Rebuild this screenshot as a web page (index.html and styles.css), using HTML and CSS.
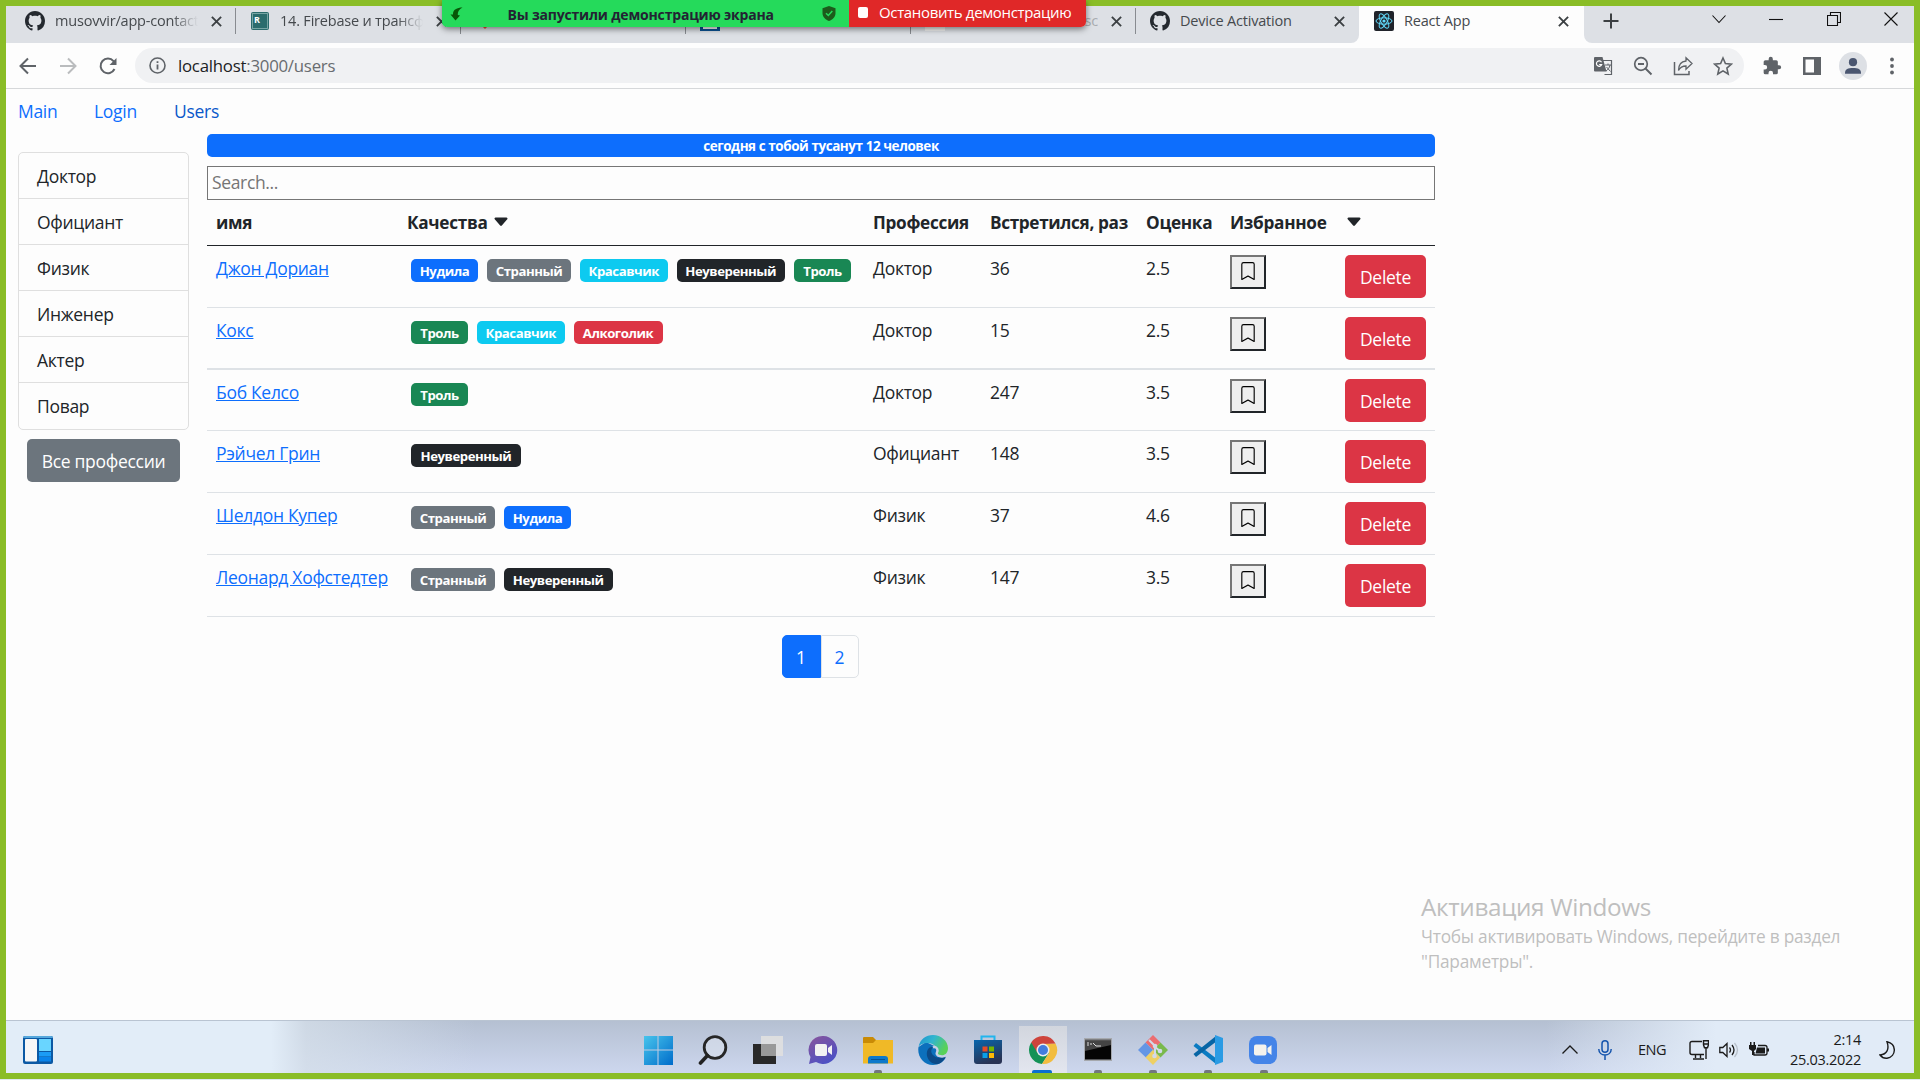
FILE: index.html
```html
<!DOCTYPE html>
<html lang="ru">
<head>
<meta charset="utf-8">
<title>React App</title>
<link rel="stylesheet" href="styles.css">
</head>
<body>
<svg class="defs" width="0" height="0">
  <symbol id="github" viewBox="0 0 16 16"><path d="M8 0C3.58 0 0 3.58 0 8c0 3.54 2.29 6.53 5.47 7.59.4.07.55-.17.55-.38 0-.19-.01-.82-.01-1.49-2.01.37-2.53-.49-2.69-.94-.09-.23-.48-.94-.82-1.13-.28-.15-.68-.52-.01-.53.63-.01 1.08.58 1.23.82.72 1.21 1.87.87 2.33.66.07-.52.28-.87.51-1.07-1.78-.2-3.64-.89-3.64-3.95 0-.87.31-1.59.82-2.15-.08-.2-.36-1.02.08-2.12 0 0 .67-.21 2.2.82.64-.18 1.32-.27 2-.27s1.36.09 2 .27c1.53-1.04 2.2-.82 2.2-.82.44 1.1.16 1.92.08 2.12.51.56.82 1.27.82 2.15 0 3.07-1.87 3.75-3.65 3.95.29.25.54.73.54 1.48 0 1.07-.01 1.93-.01 2.2 0 .21.15.46.55.38A8.01 8.01 0 0 0 16 8c0-4.42-3.58-8-8-8z" fill="#24292f"/></symbol>
  <symbol id="x" viewBox="0 0 10 10"><path d="M.8.8l8.4 8.4M9.2.8L.8 9.2" stroke="#3c4043" stroke-width="1.7"/></symbol>
  <symbol id="bookmark" viewBox="0 0 16 16"><path d="M2 2a2 2 0 0 1 2-2h8a2 2 0 0 1 2 2v13.5a.5.5 0 0 1-.777.416L8 13.101l-5.223 2.815A.5.5 0 0 1 2 15.5V2zm2-1a1 1 0 0 0-1 1v12.566l4.723-2.482a.5.5 0 0 1 .554 0L13 14.566V2a1 1 0 0 0-1-1H4z"/></symbol>
  <symbol id="caret" viewBox="0 0 16 16"><path d="M7.247 11.14 2.451 5.658C1.885 5.013 2.345 4 3.204 4h9.592a1 1 0 0 1 .753 1.659l-4.796 5.48a1 1 0 0 1-1.506 0z"/></symbol>
</svg>
<div class="screen">
  <div class="share-bar">
    <div class="share-status">
      <svg width="14" height="14" viewBox="0 0 14 14"><path d="M12.5.5C7 .5 2.800 2.500 3 7.500H.5l5 6L10 8.500l-2.200-.5C7.500 5 9 2 12.500.5z" fill="#075808"/></svg>
      <span>Вы запустили демонстрацию экрана</span>
      <svg width="14" height="15" viewBox="0 0 14 15"><path d="M7 0l6.500 2.200V7c0 4-3 6.800-6.500 8C3.500 13.800.5 11 .5 7V2.200z" fill="#1c5b1b"/><path d="M4 7.200l2.300 2.300L10.300 5" fill="none" stroke="#25da5b" stroke-width="1.500"/></svg>
    </div>
    <div class="share-stop"><i></i><span>Остановить демонстрацию</span></div>
  </div>
  <header class="tabs">
    <div class="tab"><svg class="fav" ><use href="#github"/></svg><span class="t1">musovvir/app-contact</span><svg class="close"><use href="#x"/></svg></div>
    <div class="tab"><svg class="fav" viewBox="0 0 20 20"><rect x="1" y="1" width="18" height="18" rx="2" fill="#2b6c6d"/><rect x="2.500" y="2.500" width="15" height="15" fill="none" stroke="#77a5a4"/><text x="4" y="11.500" class="r">R</text></svg><span class="t2">14. Firebase и трансфо</span><svg class="close"><use href="#x"/></svg></div>
    <div class="tab"><svg class="fav" viewBox="0 0 20 20"><path d="M10 4l7 7-7 7-7-7z" fill="#f1502f"/></svg><span></span></div>
    <div class="tab"><svg class="fav" viewBox="0 0 20 20"><path d="M0 0h20v20H0z" fill="#0b5394"/><path d="M4 6v11h12V6" fill="none" stroke="#fff" stroke-width="2"/></svg><span></span></div>
    <div class="tab"><svg class="fav" viewBox="0 0 20 20"><path d="M0 0h20v20H0z" fill="#f4f4f2"/></svg><span class="tail">sc</span><svg class="close"><use href="#x"/></svg></div>
    <div class="tab last"><svg class="fav"><use href="#github"/></svg><span class="t3">Device Activation</span><svg class="close"><use href="#x"/></svg></div>
    <div class="tab active"><svg class="fav" viewBox="0 0 20 20"><rect width="20" height="20" rx="2" fill="#20232a"/><g fill="none" stroke="#61dafb" stroke-width="1"><ellipse cx="10" cy="10" rx="8" ry="3.200"/><ellipse cx="10" cy="10" rx="8" ry="3.200" transform="rotate(60 10 10)"/><ellipse cx="10" cy="10" rx="8" ry="3.200" transform="rotate(120 10 10)"/></g><circle cx="10" cy="10" r="1.600" fill="#61dafb"/></svg><span class="t4">React App</span><svg class="close"><use href="#x"/></svg></div>
    <div class="rest">
      <svg class="plus" width="16" height="16" viewBox="0 0 16 16"><path d="M8 .5v15M.5 8h15" stroke="#3c4043" stroke-width="2"/></svg>
      <div class="win">
        <svg width="14" height="14" viewBox="0 0 14 14"><path d="M.5 3.500L7 10.500l6.500-7"/></svg>
        <svg width="14" height="14" viewBox="0 0 14 14"><path d="M0 7.500h14"/></svg>
        <svg width="14" height="14" viewBox="0 0 14 14"><path d="M.5 3.500h10v10H.5zM3.500 3V.5h10v10H11"/></svg>
        <svg width="14" height="14" viewBox="0 0 14 14"><path d="M.5.5l13 13M13.500.5l-13 13"/></svg>
      </div>
    </div>
  </header>
  <div class="toolbar">
    <svg class="nav" viewBox="0 0 18 18"><path d="M17 9H2M9 1.500L1.500 9 9 16.500" stroke="#5f6368"/></svg>
    <svg class="nav" viewBox="0 0 18 18"><path d="M1 9h15M9 1.500L16.500 9 9 16.500" stroke="#babcbe"/></svg>
    <svg class="nav" viewBox="0 0 18 18"><path d="M15.500 12A7.300 7.300 0 1 1 14.500 4.200L16 6" stroke="#5f6368"/><path d="M17.500 1v7h-7z" fill="#5f6368"/></svg>
    <div class="omni">
      <svg width="17" height="17" viewBox="0 0 17 17"><circle cx="8.500" cy="8.500" r="7.500" fill="none" stroke="#5f6368" stroke-width="1.600"/><path d="M8.500 7.500v5M8.500 4.200V6" stroke="#5f6368" stroke-width="1.800"/></svg>
      <span class="url"><b>localhost</b>:3000/users</span>
      <div class="oicons">
        <svg viewBox="0 0 20 20"><path d="M10 4.500h8.500v14H11.500" fill="none" stroke="#5f6368" stroke-width="1.200"/><path d="M2 1h7.500L13.500 15.500H2q-1 0-1-1V2q0-1 1-1z" fill="#5f6368"/><path d="M8.500 6.200A2.700 2.700 0 1 0 8.700 8.500H6.200" fill="none" stroke="#fff" stroke-width="1.200"/><path d="M12 9h6M15 7.500V9M17 9c-.5 3-2 4.500-4 6M13.500 11l4 4.500" fill="none" stroke="#5f6368"/></svg>
        <svg viewBox="0 0 20 20"><circle cx="8" cy="8" r="6.300" fill="none" stroke="#5f6368" stroke-width="1.700"/><path d="M12.500 12.500l6 6M5 8h6" stroke="#5f6368" stroke-width="1.900"/></svg>
        <svg viewBox="0 0 20 20"><path d="M1.500 6v12.500H16V15" fill="none" stroke="#5f6368" stroke-width="1.500"/><path d="M13 1.800l6 5.700-6 5.700V10c-3.500 0-6 1.500-7.500 4.500C5.500 9.500 8 5.500 13 5z" fill="none" stroke="#5f6368" stroke-width="1.300"/></svg>
        <svg viewBox="0 0 20 20"><path d="M10 2l2.400 5.500 6 .6-4.500 4 1.300 5.900L10 14.900 4.800 18l1.300-5.900-4.500-4 6-.6z" fill="none" stroke="#5f6368" stroke-width="1.600"/></svg>
      </div>
    </div>
    <div class="ext">
      <svg viewBox="0 0 24 24"><path d="M20.500 11H19V7a2 2 0 0 0-2-2h-4V3.500a2.500 2.500 0 0 0-5 0V5H4a2 2 0 0 0-2 2v3.800h1.500a2.700 2.700 0 0 1 0 5.400H2V20a2 2 0 0 0 2 2h3.800v-1.500a2.700 2.700 0 0 1 5.400 0V22H17a2 2 0 0 0 2-2v-4h1.500a2.500 2.500 0 0 0 0-5z" fill="#5f6368"/></svg>
      <svg viewBox="0 0 20 20"><path d="M1 1h18v18H1zM3.500 3.500v13H12v-13z" fill="#5f6368" fill-rule="evenodd"/></svg>
      <svg class="avatar" viewBox="0 0 28 28"><circle cx="14" cy="14" r="14" fill="#dde0e5"/><circle cx="14" cy="10.200" r="4.100" fill="#4a5670"/><path d="M6 21c0-4 3-5 8-5s8 1 8 5v.8H6z" fill="#4a5670"/></svg>
      <svg class="dots" viewBox="0 0 20 20"><g fill="#5f6368"><circle cx="10" cy="3.500" r="1.900"/><circle cx="10" cy="10" r="1.900"/><circle cx="10" cy="16.500" r="1.900"/></g></svg>
    </div>
  </div>
  <main class="page">
    <nav class="links"><a>Main</a><a>Login</a><a class="on">Users</a></nav>
    <div class="cols">
      <aside>
        <ul class="group"><li>Доктор</li><li>Официант</li><li>Физик</li><li>Инженер</li><li>Актер</li><li>Повар</li></ul>
        <button class="btn gray">Все профессии</button>
      </aside>
      <section>
        <div class="banner">сегодня с тобой тусанут 12 человек</div>
        <input class="search" placeholder="Search...">
        <table>
          <colgroup><col class="c1"><col class="c2"><col class="c3"><col class="c4"><col class="c5"><col class="c6"><col class="c7"></colgroup>
          <thead><tr><th>имя</th><th>Качества <svg class="caret"><use href="#caret"/></svg></th><th>Профессия</th><th class="met">Встретился, раз</th><th>Оценка</th><th>Избранное</th><th><svg class="caret"><use href="#caret"/></svg></th></tr></thead>
          <tbody>
            <tr><td><a>Джон Дориан</a></td><td><div class="badges"><b class="blue w67">Нудила</b><b class="grey w84">Странный</b><b class="cyan w88">Красавчик</b><b class="dark w109">Неуверенный</b><b class="green w57">Троль</b></div></td><td>Доктор</td><td>36</td><td>2.5</td><td><button class="mark"><svg><use href="#bookmark"/></svg></button></td><td><button class="btn red">Delete</button></td></tr>
            <tr class="thick"><td><a>Кокс</a></td><td><div class="badges"><b class="green w57">Троль</b><b class="cyan w88">Красавчик</b><b class="pink w89">Алкоголик</b></div></td><td>Доктор</td><td>15</td><td>2.5</td><td><button class="mark"><svg><use href="#bookmark"/></svg></button></td><td><button class="btn red">Delete</button></td></tr>
            <tr class="short"><td><a>Боб Келсо</a></td><td><div class="badges"><b class="green w57">Троль</b></div></td><td>Доктор</td><td>247</td><td>3.5</td><td><button class="mark"><svg><use href="#bookmark"/></svg></button></td><td><button class="btn red">Delete</button></td></tr>
            <tr><td><a>Рэйчел Грин</a></td><td><div class="badges"><b class="dark w110">Неуверенный</b></div></td><td>Официант</td><td>148</td><td>3.5</td><td><button class="mark"><svg><use href="#bookmark"/></svg></button></td><td><button class="btn red">Delete</button></td></tr>
            <tr><td><a>Шелдон Купер</a></td><td><div class="badges"><b class="grey w84">Странный</b><b class="blue w67">Нудила</b></div></td><td>Физик</td><td>37</td><td>4.6</td><td><button class="mark"><svg><use href="#bookmark"/></svg></button></td><td><button class="btn red">Delete</button></td></tr>
            <tr><td><a>Леонард Хофстедтер</a></td><td><div class="badges"><b class="grey w84">Странный</b><b class="dark w109">Неуверенный</b></div></td><td>Физик</td><td>147</td><td>3.5</td><td><button class="mark"><svg><use href="#bookmark"/></svg></button></td><td><button class="btn red">Delete</button></td></tr>
          </tbody>
        </table>
        <div class="pages"><span class="cur">1</span><span>2</span></div>
      </section>
    </div>
    <div class="watermark"><h2>Активация Windows</h2><p>Чтобы активировать Windows, перейдите в раздел</p><p class="p2">"Параметры".</p></div>
  </main>
  <footer class="taskbar">
    <svg class="widgets" width="30" height="28" viewBox="0 0 30 28"><rect width="30" height="28" rx="2" fill="#0c59a4"/><path d="M0 2a2 2 0 0 1 2-2h26a2 2 0 0 1 2 2z" fill="#55a7dc"/><rect x="2" y="3" width="12" height="22.500" rx="1" fill="#f7f7f7"/><path d="M16 3h12v12H16z" fill="#69d5ff"/><path d="M16 16h12v4.500H16z" fill="#1b9cf5"/><path d="M16 21h12v4.500H16z" fill="#0a84ea"/></svg>
    <div class="apps">
      <div><svg viewBox="0 0 30 30"><defs><linearGradient id="w" gradientUnits="userSpaceOnUse" x1="1" y1="1" x2="30" y2="30"><stop stop-color="#47c4ec"/><stop offset="1" stop-color="#006cca"/></linearGradient></defs><path d="M1 1h13.500v13.500H1zM15.500 1H30v13.500H15.500zM1 15.500h13.500V30H1zM15.500 15.500H30V30H15.500z" fill="url(#w)"/></svg></div>
      <div><svg viewBox="0 0 30 30"><circle cx="17" cy="12.500" r="10.800" fill="#dfe5ef" fill-opacity=".5" stroke="#262626" stroke-width="2.800"/><path d="M9.500 20.500L2.500 28" stroke="#222" stroke-width="3.600" stroke-linecap="round"/></svg></div>
      <div><svg viewBox="0 0 30 30"><path d="M0 9h23v20H0z" fill="#292929"/><path d="M8 1h22v20H8z" fill="#dfdfdf" fill-opacity=".92"/><path d="M8 9h15v12H8z" fill="#999"/></svg></div>
      <div><svg viewBox="0 0 30 30"><defs><linearGradient id="ch" x2=".6" y2="1"><stop stop-color="#8a559b"/><stop offset="1" stop-color="#4d51c4"/></linearGradient></defs><path d="M15 1a14 14 0 1 1-7 26L1 29l1.500-7A14 14 0 0 1 15 1z" fill="url(#ch)"/><rect x="7" y="9" width="12" height="12" rx="2" fill="#f2f2f2"/><path d="M20 13l4-3v10l-4-3z" fill="#f2f2f2"/></svg></div>
      <div class="run"><svg viewBox="0 0 30 30"><path d="M0 3a1 1 0 0 1 1-1h9l3 3v6H0z" fill="#c98b06"/><path d="M0 8h10l3-3h17v23.500H0z" fill="#f0b927"/><path d="M5 28.500V24q0-3 3-3h14q3 0 3 3v4.500z" fill="#0d79cb"/><path d="M8 24.500h14" stroke="#075394"/></svg></div>
      <div><svg viewBox="0 0 30 30"><defs><linearGradient id="e1" x2="1" y2=".4"><stop stop-color="#1c92cf"/><stop offset=".5" stop-color="#31b5cf"/><stop offset="1" stop-color="#59d158"/></linearGradient></defs><path d="M.5 12C-1 21 5 30 15 30c6 0 10-3 12.500-7l-5-9L8 7z" fill="#0c70bd"/><path d="M.5 12C2 4 8 0 15 0c8 0 15 6 15 13 0 5-3 7.500-7 7.500-3 0-5-1.500-4-3.500C20 12 15 8 10 8 5 8 1.500 10 .5 12z" fill="url(#e1)"/><path d="M11 13c-5 5-1 17 9 16 4-1 7-5 8-8-4 2-9 3-13-1-2-2-2.500-5 0-8-2 0-3 0-4 1z" fill="#0c4a88"/><path d="M15 12.500c2-1 4.500 0 4.500 3 0 2-1.500 2-.5 4s6 2.500 9 1" fill="none" stroke="#c8d1e4" stroke-width="2.500"/></svg></div>
      <div><svg viewBox="0 0 30 30"><defs><linearGradient id="st" x2=".4" y2="1"><stop stop-color="#0866ad"/><stop offset="1" stop-color="#283354"/></linearGradient></defs><path d="M8.500 6V1.500h13V6" fill="none" stroke="#21b5ee" stroke-width="2"/><path d="M1 5h28v21a3 3 0 0 1-3 3H4a3 3 0 0 1-3-3z" fill="url(#st)"/><path d="M9.500 11.500h5v5h-5z" fill="#e74c26"/><path d="M16 11.500h5v5h-5z" fill="#74b500"/><path d="M9.500 18h5v5h-5z" fill="#0a9fe8"/><path d="M16 18h5v5h-5z" fill="#ffb906"/></svg></div>
      <div class="cur"><svg viewBox="0 0 30 30"><path d="M3.200 7.500A14 14 0 0 0 14 29l7-11-6-3z" fill="#159256"/><path d="M14 29A14 14 0 0 0 27.500 8.500H15l6 9.500z" fill="#f2bd3f"/><path d="M27.500 8.500A14 14 0 0 0 3.200 7.500L9 17l6-8z" fill="#ce443c"/><circle cx="15" cy="15" r="6.500" fill="#eee"/><circle cx="15" cy="15" r="5" fill="#437ddd"/></svg></div>
      <div class="run"><svg viewBox="0 0 30 30"><path d="M1 3h28v23H1z" fill="#a5a8ad"/><path d="M2 4.500h26V6H2z" fill="#555"/><path d="M2 6h26v18.500H2z" fill="#050505"/><path d="M2 6h26v4L2 16z" fill="#444"/><path d="M4 8h2M4 10h2M8 8v2M10 8l3 3h5" stroke="#ddd" fill="none"/></svg></div>
      <div class="run"><svg viewBox="0 0 30 30"><path d="M15 0l7.500 7.500L15 15 7.500 7.500z" fill="#ec6d70"/><path d="M7.500 7.500L15 15l-7 7.500-8-7.500z" fill="#6496e5"/><path d="M22.500 7.500L30 15l-7.500 7.500L15 15z" fill="#79b94c"/><path d="M15 15l7 7.500-7 7.500-7.500-7.500z" fill="#eed065"/><path d="M11 5l6 6v10M17 12l5 4" stroke="#d3dae9" stroke-width="2" fill="none"/><circle cx="17" cy="11" r="2.300" fill="#d3dae9"/><circle cx="22" cy="16" r="2.300" fill="#d3dae9"/><circle cx="16.500" cy="21" r="2.300" fill="#d3dae9"/></svg></div>
      <div class="run"><svg viewBox="0 0 30 30"><path d="M3 8L24 24l-1 5L.5 11z" fill="#0a7bc2"/><path d="M3 22L24 6l-1-5L.5 19z" fill="#0765a5"/><path d="M22 0l8 3v24l-8 3z" fill="#2a9be4"/></svg></div>
      <div class="run"><svg viewBox="0 0 30 30"><rect x="1" y="1" width="28" height="28" rx="8" fill="#4484e8"/><rect x="6" y="9.500" width="12.500" height="11" rx="2" fill="#f4f2ed"/><path d="M19.500 13l4-3v10l-4-3z" fill="#f4f2ed"/></svg></div>
    </div>
    <div class="tray">
      <svg class="up" width="16" height="9" viewBox="0 0 16 9"><path d="M.5 8.500L8 1l7.500 7.500" fill="none" stroke="#1b1b1b" stroke-width="1.300"/></svg>
      <svg class="mic" width="14" height="20" viewBox="0 0 14 20"><rect x="4" y=".8" width="6" height="11.500" rx="3" fill="none" stroke="#1554ad" stroke-width="1.500"/><path d="M.8 9c0 8 12.400 8 12.400 0M7 15.500V20" fill="none" stroke="#1554ad" stroke-width="1.500"/></svg>
      <span class="lang">ENG</span>
      <svg class="mon" width="20" height="20" viewBox="0 0 20 20" fill="none" stroke="#1b1b1b" stroke-width="1.400"><path d="M13 1.500H3q-2 0-2 2v9q0 2 2 2h12M6.500 15v3M11.500 15v3M4 19h11M17 8v11"/><path d="M14.500.8h5v4l-1 3h-3l-1-3zM14.500 4h5"/></svg>
      <svg class="vol" width="20" height="16" viewBox="0 0 20 16" fill="none" stroke="#1b1b1b" stroke-width="1.300"><path d="M.8 5.500h3L8 1.500v13l-4.200-4h-3zM10.500 5.500q2 2.500 0 5M13 3q4 5 0 10"/><path d="M15.500 1q6 7 0 14" stroke="#b8c0ca"/></svg>
      <svg class="bat" width="20" height="16" viewBox="0 0 20 16"><path d="M9 3.500h7q2 0 2 2v5.500q0 2-2 2H5v-3" fill="none" stroke="#1b1b1b" stroke-width="1.300"/><path d="M8 5.500h8v6H6.500zM18 6.500h2v3h-2zM0 3h7v4l-2 2v4H3V9L0 7zM1 0h1.500v3H1zM4.500 0H6v3H4.500z" fill="#1b1b1b"/></svg>
      <div class="clock"><span>2:14</span><span>25.03.2022</span></div>
      <svg class="moon" width="16" height="18" viewBox="0 0 16 18"><path d="M8 .8C18 3 17.500 15.500 8 17.200c-3.500.3-5.500-1.200-7-3.200C8 13.500 10.500 8 8 .8z" fill="none" stroke="#1b1b1b" stroke-width="1.400"/></svg>
    </div>
  </footer>
</div>
</body>
</html>
```
FILE: styles.css
```css
* { box-sizing: border-box; }
body {
  margin: 0;
  width: 1920px;
  height: 1080px;
  overflow: hidden;
  font-family: "Open Sans", "Noto Sans", sans-serif;
  color: #212529;
  background: #dfe9f0;
}
svg { display: block; flex: none; }
.defs { position: absolute; }
.screen {
  position: relative;
  width: 1920px;
  height: 1079px;
  border: 6px solid #8abd27;
  display: flex;
  flex-direction: column;
  background: #fdfdfd;
}

/* screen-sharing bar floating over the tab strip */
.share-bar {
  position: absolute;
  z-index: 2;
  left: 436px;
  top: -6px;
  width: 644px;
  height: 27px;
  display: flex;
  border-radius: 0 0 5px 5px;
  overflow: hidden;
  box-shadow: 0 2px 6px rgba(0, 0, 0, .5);
  line-height: 27px;
  white-space: nowrap;
}
.share-status {
  width: 407px;
  background: #25da5b;
  display: flex;
  align-items: center;
  padding: 0 13px 0 8px;
  justify-content: space-between;
  font-weight: 700;
  font-size: 14px;
  color: #232333;
}
.share-status span { width: 270px; margin: 1px 0 0 -1px; letter-spacing: -.18px; }
.share-stop {
  flex: 1;
  background: #e02828;
  color: #fff;
  display: flex;
  align-items: center;
  font-size: 15px;
  letter-spacing: -.35px;
  padding-left: 9px;
}
.share-stop span { line-height: 22px; margin-bottom: 4px; }
.share-stop i { width: 10px; height: 11px; background: #fff; border-radius: 2px; margin: 0 11px 2px 0; }

.tabs { height: 37px; flex: none; background: #dde0e5; display: flex; align-items: center; padding-left: 5px; }
.tab {
  width: 225px;
  height: 26px;
  margin-bottom: 7px;
  border-right: 1px solid #888b90;
  display: flex;
  align-items: center;
  padding: 0 13px 0 14px;
  font-size: 14.500px;
  color: #45494d;
  white-space: nowrap;
}
.tab .fav { width: 20px; height: 20px; margin-right: 10px; }
.tab span { flex: 1; overflow: hidden; letter-spacing: -.2px; line-height: 22px; margin-bottom: 1px; }
.tab .close { width: 11px; height: 11px; margin-left: 13px; }
.tab .t1, .tab .t2 { -webkit-mask: linear-gradient(90deg, #000 82%, transparent); mask: linear-gradient(90deg, #000 82%, transparent); }
.tab .tail { text-align: right; color: #a9acb0; }
.tab.last { border-right: 0; width: 223px; }
.tab.active {
  height: 37px;
  margin: 0;
  padding: 0 15px 7px 15px;
  background: #fdfdfd;
  border: 0;
}
/* the strip behind the tabs curves into the white toolbar */
.tab.last { align-self: stretch; height: 37px; margin: 0; padding: 0 14px 7px; }
.rest { flex: 1; height: 37px; display: flex; align-items: center; background: #dde0e5; border-radius: 0 0 0 8px; }
.tabs { background: linear-gradient(#fdfdfd, #fdfdfd) 1330px 0 / 270px 37px no-repeat, #dde0e5; }
.tab.last { background: #dde0e5; border-radius: 0 0 8px 0; }
.r { font: 700 9px "Open Sans", sans-serif; fill: #fff; }
.plus { margin: 0 0 7px 19px; }
.win { margin: 0 16px 12px auto; display: flex; gap: 43.500px; }
.win path { fill: none; stroke: #111; stroke-width: 1.1; }

.toolbar { height: 46px; flex: none; border-bottom: 1px solid #d6d8da; display: flex; align-items: center; padding-left: 13px; }
.nav { width: 18px; height: 18px; margin-right: 22px; }
.nav path:first-child { fill: none; stroke-width: 2; }
.omni { width: 1609px; height: 35px; margin-left: -4px; border-radius: 18px; background: #f0f1f3; display: flex; align-items: center; padding: 0 11px 0 14px; }
.url { margin-left: 12px; font-size: 16.800px; color: #686c70; letter-spacing: -.23px; }
.url b { font-weight: 400; color: #202124; }
.oicons { margin-left: auto; display: flex; gap: 20px; }
.oicons svg, .ext svg { width: 20px; height: 20px; }
.ext { display: flex; align-items: center; gap: 20px; margin-left: 18px; }
.ext .avatar { width: 28px; height: 28px; margin: 0 -3px; }
.ext .dots { margin-left: -2px; }

.page { flex: 1; position: relative; font-size: 17.500px; overflow: hidden; }
.links { display: flex; padding: 9px 0 0 12px; height: 45px; line-height: 27px; color: #0d6efd; letter-spacing: -.3px; }
.links a { width: 76px; }
.links a + a { width: 80px; }
.links .on { color: #0a58ca; }
.cols { display: flex; }
aside { width: 171px; margin: 18px 18px 0 12px; }
.group { list-style: none; margin: 0; padding: 0; height: 278px; border: 1px solid #dfdfdf; border-radius: 5px; display: grid; grid-template-rows: repeat(6, 1fr); letter-spacing: -.3px; }
.group li { display: flex; align-items: center; padding-left: 18px; border-bottom: 1px solid #dfdfdf; }
.group li:last-child { border: 0; }
.btn { font: 17.500px "Open Sans", sans-serif; color: #fff; border: 0; border-radius: 5px; height: 43px; padding: 0; display: block; letter-spacing: -.3px; }
.gray { width: 153px; margin: 9px 0 0 9px; background: #6c757d; }
.red { width: 81px; background: #dc3545; }
section { width: 1228px; }
.banner { height: 23px; border-radius: 5px; background: #0d6efd; color: #fff; font-weight: 700; font-size: 13.500px; line-height: 24px; text-align: center; letter-spacing: -.45px; }
.search { display: block; margin: 9px 0 0; width: 100%; height: 34px; border: 1px solid #767676; font: 17.500px "Open Sans", sans-serif; padding: 0 4px 2px; letter-spacing: -.35px; background: #fdfdfd; border-radius: 0; }
.search::placeholder { color: #757575; }
table { width: 1228px; table-layout: fixed; border-collapse: separate; border-spacing: 0; letter-spacing: -.3px; }
.c1 { width: 191px; } .c2 { width: 466px; } .c3 { width: 117px; } .c4 { width: 156px; } .c5 { width: 84px; } .c6 { width: 115px; }
th { height: 46px; padding: 0 9px; text-align: left; border-bottom: 1px solid #212529; white-space: nowrap; font-size: 17.200px; }
.met { letter-spacing: -.35px; }
td { height: 62px; padding: 9px 9px 0; vertical-align: top; border-bottom: 1px solid #dee2e6; line-height: 27px; white-space: nowrap; }
.short td { height: 61px; }
.thick td { border-bottom-width: 2px; }
td a { color: #0d6efd; text-decoration: underline; }
.caret { width: 18px; height: 18px; display: inline-block; vertical-align: -2px; fill: #212529; }
.badges { display: flex; gap: 9px; padding: 4px 0 0 4px; }
.badges b { height: 23px; line-height: 24px; border-radius: 5px; color: #fff; font-size: 13.200px; text-align: center; letter-spacing: -.45px; }
.w67 { width: 67px; } .w84 { width: 84px; } .w88 { width: 87.500px; } .w109 { width: 108.500px; } .w110 { width: 110px; } .w57 { width: 57px; } .w89 { width: 89px; }
.blue { background: #0d6efd; } .grey { background: #6c757d; } .cyan { background: #0dcaf0; } .dark { background: #212529; } .green { background: #198754; } .pink { background: #dc3545; }
.mark { display: flex; align-items: flex-start; justify-content: center; width: 36px; height: 34px; padding: 5px 0 0; border: 2px solid; border-color: #767676 #212529 #212529 #767676; background: #efefef; }
.mark svg { width: 18px; height: 18px; }
.pages { display: flex; justify-content: center; margin: 18px 2px 0 0; height: 43px; line-height: 42px; text-align: center; color: #0d6efd; }
.pages span { width: 38px; border: 1px solid #dee2e6; border-radius: 0 5px 5px 0; }
.pages .cur { width: 39px; background: #0d6efd; color: #fff; border-color: #0d6efd; border-radius: 5px 0 0 5px; }
.watermark { position: absolute; left: 1415px; top: 801px; color: #bfbfbf; white-space: nowrap; }
.watermark h2 { margin: 0; font-weight: 400; font-size: 24.300px; line-height: 34px; letter-spacing: -.35px; }
.watermark p { margin: 0; font-size: 17.300px; line-height: 25px; letter-spacing: -.24px; }

.taskbar {
  height: 53px;
  flex: none;
  display: flex;
  align-items: center;
  border-top: 1px solid #b9c4d2;
  background:
    linear-gradient(90deg, #e2edf8 0, #e2edf8 265px, rgba(214, 224, 234, .75) 300px, rgba(214, 224, 238, 0) 470px, rgba(225, 235, 247, 0) 1540px, #e1ebf7 1710px),
    linear-gradient(#b5c0d2, #cdd7ee);
  padding-left: 17px;
}
.widgets { margin-top: 5px; }
.apps { display: flex; margin-left: 577px; height: 52px; }
.apps div { position: relative; width: 55.050px; display: flex; align-items: center; justify-content: center; padding-top: 5px; }
.apps svg { width: 30px; height: 30px; }
.apps .run::after, .apps .cur::after { content: ""; position: absolute; bottom: 0; left: 24px; width: 8px; height: 3px; border-radius: 2px 2px 0 0; background: #72777f; }
.apps .cur::after { left: 17px; width: 20px; background: #0a6fd0; }
.apps .cur { background: linear-gradient(#d2d6de, #e3e6ef) center bottom / 48px 47px no-repeat; }
.tray { margin-left: auto; display: flex; align-items: center; height: 52px; padding: 5px 19px 0 0; font-size: 14.500px; color: #1b1b1b; }
.up { margin-right: 20px; }
.mic { margin-right: 26px; }
.lang { width: 29px; letter-spacing: -.45px; margin-right: 22px; }
.mon { margin-right: 10px; }
.vol { margin-right: 10px; }
.bat { margin-right: 17px; }
.clock { width: 75px; display: flex; flex-direction: column; align-items: flex-end; line-height: 20px; letter-spacing: -.3px; margin-right: 18px; }
```
